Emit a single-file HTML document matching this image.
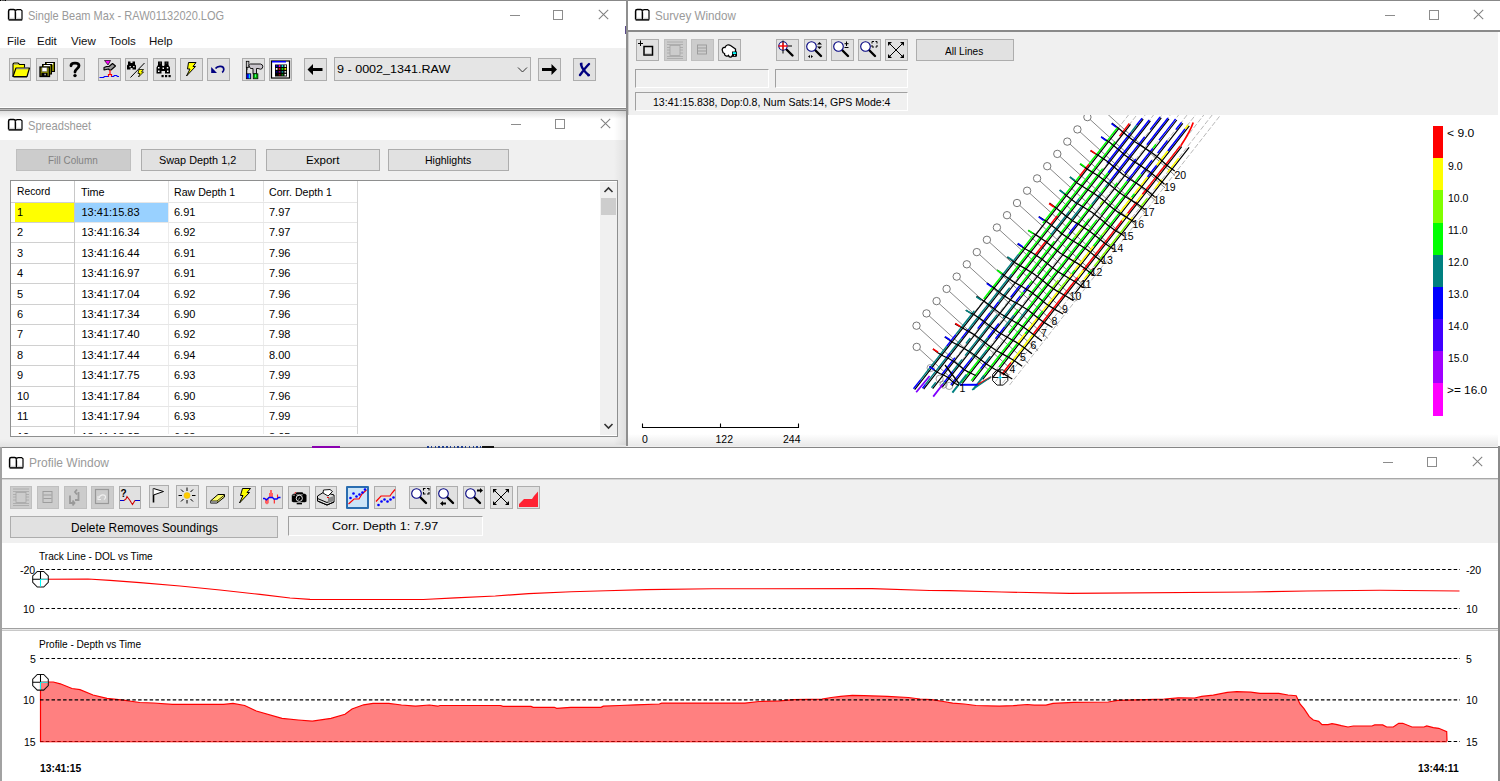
<!DOCTYPE html><html><head><meta charset="utf-8"><style>
*{box-sizing:border-box}
body{margin:0;width:1500px;height:781px;position:relative;overflow:hidden;background:#f0f0f0;font-family:"Liberation Sans",sans-serif;color:#000}
.a{position:absolute}
.t{position:absolute;white-space:nowrap;line-height:1}
.btn{position:absolute;background:#e1e1e1;border:1px solid #adadad}
.dis{position:absolute;background:#cccccc;border:1px solid #bfbfbf}
.title{position:absolute;white-space:nowrap;line-height:1;color:#999;font-size:11.5px}
</style></head><body><div class="a" style="left:0px;top:0px;width:628px;height:111px;background:#fff"></div>
<div class="a" style="left:0px;top:0px;width:628px;height:1px;background:#888"></div>
<div class="a" style="left:0px;top:0px;width:1px;height:1px;background:#000"></div>
<div class="a" style="left:2px;top:0px;width:3px;height:1px;background:#555"></div>
<div class="a" style="left:5px;top:0px;width:1px;height:1px;background:#000"></div>
<div class="a" style="left:0px;top:48px;width:626px;height:60px;background:#f0f0f0"></div>
<div class="a" style="left:0px;top:107px;width:626px;height:1px;background:#fff"></div>
<div class="a" style="left:0px;top:108px;width:628px;height:1px;background:#858585"></div>
<div class="a" style="left:0px;top:109px;width:628px;height:1px;background:#b8b8b8"></div>
<div class="a" style="left:0px;top:110px;width:628px;height:1px;background:#858585"></div>
<svg class="a" style="left:7px;top:8px" width="17" height="14" viewBox="0 0 17 14"><path d="M1.6 11.6V3.2Q1.6 1.6 3.2 1.6H6.6Q8.4 1.6 8.4 3.2V11.6" fill="#fff" stroke="#000" stroke-width="1.5"/><path d="M8.6 3.2Q8.6 1.6 10.2 1.6H13.6L15 2.8V11.6" fill="#fff" stroke="#000" stroke-width="1.2"/><path d="M1.6 11.9H15.2" stroke="#000" stroke-width="1.5"/><path d="M3 10.3H7M10 10.3H14" stroke="#bbb" stroke-width="0.8"/></svg>
<div class="t" style="left:27.63px;top:9.87px;font-size:12.2px;color:#9a9a9a;transform:scaleX(0.9048);transform-origin:0 0">Single Beam Max - RAW01132020.LOG</div>
<div class="a" style="left:510px;top:15px;width:10px;height:1px;background:#8c8c8c"></div>
<div class="a" style="left:553px;top:10px;width:10px;height:10px;border:1px solid #8c8c8c"></div>
<svg class="a" style="left:598px;top:9px" width="11" height="11" viewBox="0 0 11 11"><path d="M0.8 0.8L10.2 10.2M10.2 0.8L0.8 10.2" stroke="#808080" stroke-width="1.05"/></svg>
<div class="t" style="left:7px;top:35.80px;font-size:11.5px;color:#111;">File</div>
<div class="t" style="left:37px;top:35.80px;font-size:11.5px;color:#111;">Edit</div>
<div class="t" style="left:71px;top:35.80px;font-size:11.5px;color:#111;">View</div>
<div class="t" style="left:109px;top:35.80px;font-size:11.5px;color:#111;">Tools</div>
<div class="t" style="left:149px;top:35.80px;font-size:11.5px;color:#111;">Help</div>
<div class="a" style="left:0px;top:111px;width:626px;height:334px;background:#f0f0f0"></div>
<div class="a" style="left:0px;top:111px;width:626px;height:29px;background:#fff"></div>
<div class="a" style="left:0px;top:111px;width:626px;height:8px;background:linear-gradient(#dedede,rgba(255,255,255,0))"></div>
<svg class="a" style="left:7px;top:118px" width="17" height="14" viewBox="0 0 17 14"><path d="M1.6 11.6V3.2Q1.6 1.6 3.2 1.6H6.6Q8.4 1.6 8.4 3.2V11.6" fill="#fff" stroke="#000" stroke-width="1.5"/><path d="M8.6 3.2Q8.6 1.6 10.2 1.6H13.6L15 2.8V11.6" fill="#fff" stroke="#000" stroke-width="1.2"/><path d="M1.6 11.9H15.2" stroke="#000" stroke-width="1.5"/><path d="M3 10.3H7M10 10.3H14" stroke="#bbb" stroke-width="0.8"/></svg>
<div class="t" style="left:27.82px;top:119.57px;font-size:12.2px;color:#9a9a9a;transform:scaleX(0.9137);transform-origin:0 0">Spreadsheet</div>
<div class="a" style="left:511px;top:124px;width:10px;height:1px;background:#8c8c8c"></div>
<div class="a" style="left:555px;top:119px;width:10px;height:10px;border:1px solid #8c8c8c"></div>
<svg class="a" style="left:600px;top:118px" width="11" height="11" viewBox="0 0 11 11"><path d="M0.8 0.8L10.2 10.2M10.2 0.8L0.8 10.2" stroke="#808080" stroke-width="1.05"/></svg>
<div class="a" style="left:628px;top:0px;width:872px;height:447px;background:#f0f0f0"></div>
<div class="a" style="left:1498px;top:32px;width:2px;height:83px;background:#fff"></div>
<div class="a" style="left:628px;top:32px;width:1px;height:83px;background:#cfcfcf"></div>
<div class="a" style="left:625px;top:26px;width:1px;height:8px;background:#5a4a8a"></div>
<div class="a" style="left:628px;top:0px;width:872px;height:1px;background:#888"></div>
<div class="a" style="left:628px;top:1px;width:872px;height:30px;background:#fff"></div>
<div class="a" style="left:628px;top:30px;width:872px;height:2px;background:#8a8a8a"></div>
<svg class="a" style="left:634px;top:8px" width="17" height="14" viewBox="0 0 17 14"><path d="M1.6 11.6V3.2Q1.6 1.6 3.2 1.6H6.6Q8.4 1.6 8.4 3.2V11.6" fill="#fff" stroke="#000" stroke-width="1.5"/><path d="M8.6 3.2Q8.6 1.6 10.2 1.6H13.6L15 2.8V11.6" fill="#fff" stroke="#000" stroke-width="1.2"/><path d="M1.6 11.9H15.2" stroke="#000" stroke-width="1.5"/><path d="M3 10.3H7M10 10.3H14" stroke="#bbb" stroke-width="0.8"/></svg>
<div class="t" style="left:654.98px;top:9.67px;font-size:12.2px;color:#9a9a9a;transform:scaleX(0.9546);transform-origin:0 0">Survey Window</div>
<div class="a" style="left:1385px;top:15px;width:10px;height:1px;background:#8c8c8c"></div>
<div class="a" style="left:1429px;top:10px;width:10px;height:10px;border:1px solid #8c8c8c"></div>
<svg class="a" style="left:1473px;top:9px" width="11" height="11" viewBox="0 0 11 11"><path d="M0.8 0.8L10.2 10.2M10.2 0.8L0.8 10.2" stroke="#808080" stroke-width="1.05"/></svg>
<div class="a" style="left:628px;top:115px;width:872px;height:331px;background:#fff"></div>
<div class="a" style="left:628px;top:434px;width:870px;height:12px;background:linear-gradient(rgba(240,240,240,0),#e9e9e9)"></div>
<div class="a" style="left:614px;top:111px;width:12px;height:334px;background:linear-gradient(90deg,rgba(0,0,0,0),rgba(0,0,0,0.07))"></div>
<div class="a" style="left:626px;top:0px;width:2px;height:447px;background:#8f8f8f"></div>
<div class="a" style="left:0px;top:446px;width:1500px;height:335px;background:#f0f0f0"></div>
<div class="a" style="left:0px;top:439px;width:626px;height:8px;background:linear-gradient(rgba(0,0,0,0),rgba(0,0,0,0.06))"></div>
<div class="a" style="left:0px;top:447px;width:1500px;height:1px;background:#858585"></div>
<div class="a" style="left:0px;top:448px;width:1498px;height:30px;background:#fff"></div>
<div class="a" style="left:0px;top:478px;width:1498px;height:1px;background:#a8a8a8"></div>
<div class="a" style="left:0px;top:479px;width:1498px;height:1px;background:#d5d5d5"></div>
<div class="a" style="left:0px;top:447px;width:2px;height:334px;background:#a2a2a2"></div>
<div class="a" style="left:1498px;top:446px;width:2px;height:335px;background:#8a8a8a"></div>
<svg class="a" style="left:8px;top:456px" width="17" height="14" viewBox="0 0 17 14"><path d="M1.6 11.6V3.2Q1.6 1.6 3.2 1.6H6.6Q8.4 1.6 8.4 3.2V11.6" fill="#fff" stroke="#000" stroke-width="1.5"/><path d="M8.6 3.2Q8.6 1.6 10.2 1.6H13.6L15 2.8V11.6" fill="#fff" stroke="#000" stroke-width="1.2"/><path d="M1.6 11.9H15.2" stroke="#000" stroke-width="1.5"/><path d="M3 10.3H7M10 10.3H14" stroke="#bbb" stroke-width="0.8"/></svg>
<div class="a" style="left:312px;top:446.3px;width:28px;height:1.6px;background:#8a00b0"></div>
<div class="a" style="left:427px;top:446.3px;width:54px;height:1.6px;background:repeating-linear-gradient(90deg,#1f3f8f 0 1.5px,transparent 1.5px 3.8px)"></div>
<div class="a" style="left:482px;top:446.3px;width:12px;height:1.6px;background:#111"></div>
<div class="t" style="left:28.76px;top:457.07px;font-size:12.2px;color:#9a9a9a;transform:scaleX(0.9840);transform-origin:0 0">Profile Window</div>
<div class="a" style="left:1383px;top:462px;width:10px;height:1px;background:#8c8c8c"></div>
<div class="a" style="left:1427px;top:457px;width:10px;height:10px;border:1px solid #8c8c8c"></div>
<svg class="a" style="left:1472px;top:456px" width="11" height="11" viewBox="0 0 11 11"><path d="M0.8 0.8L10.2 10.2M10.2 0.8L0.8 10.2" stroke="#808080" stroke-width="1.05"/></svg>
<div class="a" style="left:2px;top:543px;width:1496px;height:238px;background:#fff"></div>
<div class="a" style="left:9px;top:58px;width:22px;height:23px;background:#e1e1e1;border:1px solid #adadad"></div>
<svg class="a" style="left:9px;top:58px" width="22" height="23" viewBox="0 0 22 23"><path d="M4 18.5 V6 L5 5 H9 L10.5 6.5 H15.5 V9.5" fill="#ffff00" stroke="#000" stroke-width="1.1"/><path d="M4 18.5 L7 10 H20.5 L18 18.5 Z" fill="#ffff00" stroke="#000" stroke-width="1.2" stroke-linejoin="round"/><path d="M5 6.2 H9 M7.5 10.8 H19" stroke="#7070d0" stroke-width="0.8"/><path d="M4.5 19 H18" stroke="#000" stroke-width="1"/></svg>
<div class="a" style="left:36px;top:58px;width:22px;height:23px;background:#e1e1e1;border:1px solid #adadad"></div>
<svg class="a" style="left:36px;top:58px" width="22" height="23" viewBox="0 0 22 23"><rect x="9.5" y="4.5" width="9" height="9" fill="#808000" stroke="#000" stroke-width="1"/><rect x="11" y="5" width="6" height="1.5" fill="#fff"/><rect x="6.5" y="6.5" width="9" height="9.5" fill="#808000" stroke="#000" stroke-width="1"/><rect x="8" y="7" width="6" height="1.5" fill="#fff"/><rect x="4" y="9" width="9.5" height="9.5" fill="#808000" stroke="#000" stroke-width="1.3"/><rect x="6" y="9.6" width="5" height="4" fill="#fff" stroke="#555" stroke-width="0.5"/><rect x="5.5" y="15" width="6" height="3" fill="#000"/><rect x="8.5" y="15.7" width="1.2" height="1.6" fill="#ddd"/></svg>
<div class="a" style="left:63px;top:58px;width:22px;height:23px;background:#e1e1e1;border:1px solid #adadad"></div>
<svg class="a" style="left:63px;top:58px" width="22" height="23" viewBox="0 0 22 23"><path d="M8 7.8 C8 4.2 16 4.2 16 7.8 C16 10.5 12 11 12 14" fill="none" stroke="#000" stroke-width="2.8" stroke-linecap="round"/><circle cx="12" cy="17.6" r="1.7" fill="#000"/></svg>
<div class="a" style="left:98px;top:58px;width:23px;height:23px;background:#e1e1e1;border:1px solid #adadad"></div>
<svg class="a" style="left:98px;top:58px" width="23" height="23" viewBox="0 0 23 23"><path d="M6.5 2.5 L12.5 2.5 L10 7 Z" fill="#ff00ff" stroke="#000" stroke-width="0.7"/><path d="M6 12 V9.5 L8.5 8.5 H11 L14.5 5.5 L17.5 8 L13 12 H11.5 L10.5 11 Z" fill="#999" stroke="#000" stroke-width="1.1" stroke-linejoin="round"/><path d="M12 12 V17 M10.5 19 V16.5 H13.5 V19" stroke="#ff0000" stroke-width="1.2" fill="none"/><path d="M1.5 19.5 H5.5 L6.5 18.5 H10.5 M13.5 18.5 H15.5 L16.5 17.5 H18.5 L19.5 18.5 H21" stroke="#0000ff" stroke-width="1.2" fill="none"/></svg>
<div class="a" style="left:125px;top:58px;width:23px;height:23px;background:#e1e1e1;border:1px solid #adadad"></div>
<svg class="a" style="left:125px;top:58px" width="23" height="23" viewBox="0 0 23 23"><path d="M3 3.5 h2.5 v1.5 h2 v-1.5 h2.5 v3 l1 1 v4 h-3.5 v-1.5 h-2 v1.5 h-3.5 v-4 l1 -1 z" fill="#000"/><rect x="4.5" y="8" width="1.3" height="1.3" fill="#fff"/><rect x="8.2" y="8" width="1.3" height="1.3" fill="#fff"/><path d="M5.5 19.5 L19.5 5" stroke="#000" stroke-width="1"/><path d="M14 11.5 L18.5 11.5 L16.5 14 L18.5 14 L13.5 19 L15 15.5 L13 15.5 Z" fill="#ffff00" stroke="#000" stroke-width="0.8"/></svg>
<div class="a" style="left:153px;top:58px;width:23px;height:23px;background:#e1e1e1;border:1px solid #adadad"></div>
<svg class="a" style="left:153px;top:58px" width="23" height="23" viewBox="0 0 23 23"><path d="M3.5 15.5 V9.5 L5 7 V3.5 H9 V7 L9.5 8 H11 L11.5 7 V3.5 H15.5 V7 L17 9.5 V15.5 H12 V13 H8.5 V15.5 Z" fill="#000"/><rect x="5" y="9" width="1.5" height="1.5" fill="#fff"/><rect x="9.5" y="9.5" width="1.5" height="1.5" fill="#fff"/><rect x="13.8" y="9" width="1.5" height="1.5" fill="#fff"/><rect x="5" y="12.5" width="1.5" height="1.5" fill="#fff"/><rect x="14" y="12.5" width="1.5" height="1.5" fill="#fff"/><rect x="6.5" y="4.5" width="1.5" height="1" fill="#555"/><rect x="12.8" y="4.5" width="1.5" height="1" fill="#555"/><rect x="8.5" y="17" width="2.2" height="2.2" fill="#000"/><rect x="12" y="17" width="2.2" height="2.2" fill="#000"/><rect x="15.5" y="17" width="2.2" height="2.2" fill="#000"/></svg>
<div class="a" style="left:180px;top:58px;width:23px;height:23px;background:#e1e1e1;border:1px solid #adadad"></div>
<svg class="a" style="left:180px;top:58px" width="23" height="23" viewBox="0 0 23 23"><path d="M8.5 4.5 L16 4.5 L13 8.5 L15.5 8.5 L6.5 18 L10 11 L7.5 11 Z" fill="#ffff00" stroke="#000" stroke-width="1" stroke-linejoin="round"/></svg>
<div class="a" style="left:207px;top:58px;width:23px;height:23px;background:#e1e1e1;border:1px solid #adadad"></div>
<svg class="a" style="left:207px;top:58px" width="23" height="23" viewBox="0 0 23 23"><path d="M8.5 10.5 C10.5 7.5 16.8 7.5 16.8 11.2 C16.8 12.8 16 13.8 15.2 14.5" fill="none" stroke="#000080" stroke-width="1.7"/><path d="M4.2 9 L4.2 15 L10 15 Z" fill="#000080"/></svg>
<div class="a" style="left:242px;top:58px;width:23px;height:23px;background:#e1e1e1;border:1px solid #adadad"></div>
<svg class="a" style="left:242px;top:58px" width="23" height="23" viewBox="0 0 23 23"><rect x="4.3" y="3.3" width="2.6" height="6" fill="#c8c8c8" stroke="#000" stroke-width="0.8"/><path d="M4.8 9 V16" stroke="#000" stroke-width="1.4"/><path d="M5.9 12 V15.8" stroke="#ddd" stroke-width="1"/><path d="M6.8 7.5 L8.5 6 H18.5 Q21 6.5 20.8 8.8 Q20.5 11.2 18.5 11.2 L16 10.5 H14.5 V15.8 H11 V10.5 H8.5 Z" fill="#c9c5cc" stroke="#000" stroke-width="0.9"/><rect x="4.3" y="15.8" width="4.5" height="5" fill="#0000ee" stroke="#000" stroke-width="0.7"/><rect x="6.8" y="16.3" width="1" height="4" fill="#00ffff"/><rect x="11.2" y="15.8" width="4.7" height="5" fill="#00aa00" stroke="#000" stroke-width="0.7"/><rect x="13" y="16.3" width="1" height="3" fill="#44ff88"/></svg>
<div class="a" style="left:269px;top:58px;width:23px;height:23px;background:#e1e1e1;border:1px solid #adadad"></div>
<svg class="a" style="left:269px;top:58px" width="23" height="23" viewBox="0 0 23 23"><rect x="2.5" y="3" width="18" height="17" fill="#fff" stroke="#000" stroke-width="1.2"/><rect x="3" y="3" width="14" height="1.5" fill="#0000ff"/><rect x="6" y="6.5" width="12" height="12" fill="#000"/><rect x="6.8" y="7.2" width="1.7" height="1.7" fill="#00f"/><rect x="9.7" y="7.2" width="1.7" height="1.7" fill="#f0f"/><rect x="12.6" y="7.2" width="1.7" height="1.7" fill="#0ff"/><rect x="15.5" y="7.2" width="1.7" height="1.7" fill="#fff"/><rect x="6.8" y="10.1" width="1.7" height="1.7" fill="#fff"/><rect x="9.7" y="10.1" width="1.7" height="1.7" fill="#f00"/><rect x="12.6" y="10.1" width="1.7" height="1.7" fill="#0f0"/><rect x="15.5" y="10.1" width="1.7" height="1.7" fill="#ff0"/><rect x="6.8" y="13.0" width="1.7" height="1.7" fill="#008"/><rect x="9.7" y="13.0" width="1.7" height="1.7" fill="#808"/><rect x="12.6" y="13.0" width="1.7" height="1.7" fill="#088"/><rect x="15.5" y="13.0" width="1.7" height="1.7" fill="#ccc"/><rect x="6.8" y="15.9" width="1.7" height="1.7" fill="#000"/><rect x="9.7" y="15.9" width="1.7" height="1.7" fill="#800"/><rect x="12.6" y="15.9" width="1.7" height="1.7" fill="#080"/><rect x="15.5" y="15.9" width="1.7" height="1.7" fill="#fff"/></svg>
<div class="a" style="left:304px;top:58px;width:23px;height:23px;background:#e1e1e1;border:1px solid #adadad"></div>
<svg class="a" style="left:304px;top:58px" width="23" height="23" viewBox="0 0 23 23"><path d="M3.5 11.5 L9 6 L9 10 L18.5 10 L18.5 13 L9 13 L9 17 Z" fill="#000"/></svg>
<div class="a" style="left:538px;top:58px;width:23px;height:23px;background:#e1e1e1;border:1px solid #adadad"></div>
<svg class="a" style="left:538px;top:58px" width="23" height="23" viewBox="0 0 23 23"><path d="M19 11.5 L13.5 6 L13.5 10 L4 10 L4 13 L13.5 13 L13.5 17 Z" fill="#000"/></svg>
<div class="a" style="left:573px;top:58px;width:23px;height:23px;background:#e1e1e1;border:1px solid #adadad"></div>
<svg class="a" style="left:573px;top:58px" width="23" height="23" viewBox="0 0 23 23"><path d="M8 6.5 C9 10.5 12 14 15.5 17 M16 6 C12.5 9.5 10 13 7 17" stroke="#000080" stroke-width="2.4" fill="none" stroke-linecap="round"/><path d="M7 6 L9.5 5.5 M14.5 17.5 L16.8 17" stroke="#000080" stroke-width="2"/></svg>
<div class="a" style="left:334px;top:57px;width:197px;height:24px;background:#e5e5e5;border:1px solid #adadad"></div>
<div class="t" style="left:336.72px;top:64.31px;font-size:11.8px;color:#000;transform:scaleX(1.0647);transform-origin:0 0">9 - 0002_1341.RAW</div>
<svg class="a" style="left:517px;top:66px" width="11" height="7" viewBox="0 0 11 7"><path d="M1 1.5L5.5 6L10 1.5" fill="none" stroke="#333" stroke-width="1"/></svg>
<div class="a" style="left:16px;top:149px;width:115px;height:22px;background:#cccccc;border:1px solid #bfbfbf"></div>
<div class="t" style="left:48.40px;top:154.86px;font-size:10.8px;color:#838383;transform:scaleX(0.9202);transform-origin:0 0">Fill Column</div>
<div class="a" style="left:141px;top:149px;width:115px;height:22px;background:#e1e1e1;border:1px solid #adadad"></div>
<div class="t" style="left:158.94px;top:154.86px;font-size:10.8px;color:#000;transform:scaleX(1.0051);transform-origin:0 0">Swap Depth 1,2</div>
<div class="a" style="left:266px;top:149px;width:114px;height:22px;background:#e1e1e1;border:1px solid #adadad"></div>
<div class="t" style="left:305.69px;top:154.86px;font-size:10.8px;color:#000;transform:scaleX(1.0705);transform-origin:0 0">Export</div>
<div class="a" style="left:388px;top:149px;width:121px;height:22px;background:#e1e1e1;border:1px solid #adadad"></div>
<div class="t" style="left:424.86px;top:154.86px;font-size:10.8px;color:#000;transform:scaleX(0.9736);transform-origin:0 0">Highlights</div>
<div class="a" style="left:636px;top:39px;width:23px;height:22px;background:#e1e1e1;border:1px solid #adadad"></div>
<svg class="a" style="left:636px;top:39px" width="23" height="22" viewBox="0 0 23 22"><path d="M4.5 1.5V7 M2 4.5H7" stroke="#000" stroke-width="1"/><rect x="8" y="7.5" width="8.5" height="8.5" fill="#e8e8e8" stroke="#000" stroke-width="1.5"/><path d="M8.5 15.2H16" stroke="#555" stroke-width="0.8"/></svg>
<div class="a" style="left:664px;top:39px;width:23px;height:22px;background:#cccccc;border:1px solid #bfbfbf"></div>
<svg class="a" style="left:664px;top:39px" width="23" height="22" viewBox="0 0 23 22"><g stroke="#a6a6a6" stroke-width="0.8" fill="none"><path d="M3 3H19 M3 5.5H19 M3 17.5H19 M3 19.5H19 M3 8.5H6 M3 11H6 M3 14H6 M16 8.5H19 M16 11H19 M16 14H19"/><rect x="6" y="6.5" width="10" height="10" fill="#ccc"/></g></svg>
<div class="a" style="left:691px;top:39px;width:23px;height:22px;background:#cccccc;border:1px solid #bfbfbf"></div>
<svg class="a" style="left:691px;top:39px" width="23" height="22" viewBox="0 0 23 22"><g stroke="#999" stroke-width="0.9" fill="none"><rect x="6.5" y="6" width="9" height="9"/><path d="M7 9H15 M7 12H15"/></g></svg>
<div class="a" style="left:718px;top:39px;width:23px;height:22px;background:#e1e1e1;border:1px solid #adadad"></div>
<svg class="a" style="left:718px;top:39px" width="23" height="22" viewBox="0 0 23 22"><path d="M4.5 12 C3.5 10 5 8 7 8.5 C8 6 10.5 5 12.5 6.5 L17.5 10 V17 H14 C13.5 18.5 11 18.5 10.5 16.5 C9.5 17.5 6 17 6.5 14.5 C5 14 4.5 13 4.5 12Z" fill="#fff" stroke="#000" stroke-width="1.3"/><rect x="14" y="12.5" width="5" height="5" fill="#000"/><rect x="14.8" y="13.2" width="3.4" height="1.8" fill="#00ffff"/><rect x="16" y="15.8" width="1.2" height="1" fill="#fff"/></svg>
<div class="a" style="left:776px;top:39px;width:23px;height:22px;background:#e1e1e1;border:1px solid #adadad"></div>
<svg class="a" style="left:776px;top:39px" width="23" height="22" viewBox="0 0 23 22"><path d="M10.5 10.5 L16.5 16.5" stroke="#000" stroke-width="2.4" stroke-linecap="round"/><circle cx="7" cy="7" r="4.2" fill="#fff" stroke="#000080" stroke-width="1.1"/><path d="M7 1.5V14.5" stroke="#000" stroke-width="1"/><path d="M2.5 7H11.5" stroke="#ff0000" stroke-width="1.4"/><path d="M7 3.5V10.5" stroke="#ff0000" stroke-width="1.2"/><path d="M12 7H16" stroke="#000" stroke-width="1"/></svg>
<div class="a" style="left:804px;top:39px;width:23px;height:22px;background:#e1e1e1;border:1px solid #adadad"></div>
<svg class="a" style="left:804px;top:39px" width="23" height="22" viewBox="0 0 23 22"><path d="M11.0 11.0 L17.0 17.0" stroke="#000" stroke-width="2.4" stroke-linecap="round"/><circle cx="7.5" cy="7.5" r="4.8" fill="#fff" stroke="#000080" stroke-width="1.1"/><path d="M15.5 3 L18 5.5 H13 Z M15.5 10 L18 7.5 H13 Z" fill="#000"/><path d="M4 17.5 L6 16 V19 Z M9 17.5 L7 16 V19 Z" fill="#000"/></svg>
<div class="a" style="left:831px;top:39px;width:23px;height:22px;background:#e1e1e1;border:1px solid #adadad"></div>
<svg class="a" style="left:831px;top:39px" width="23" height="22" viewBox="0 0 23 22"><path d="M11.0 11.0 L17.0 17.0" stroke="#000" stroke-width="2.4" stroke-linecap="round"/><circle cx="7.5" cy="7.5" r="4.8" fill="#fff" stroke="#000080" stroke-width="1.1"/><path d="M15.5 2.5V7 M13.5 4.7H17.5 M13.5 8.5H17.5" stroke="#000" stroke-width="1"/></svg>
<div class="a" style="left:858px;top:39px;width:23px;height:22px;background:#e1e1e1;border:1px solid #adadad"></div>
<svg class="a" style="left:858px;top:39px" width="23" height="22" viewBox="0 0 23 22"><path d="M11.0 11.0 L17.0 17.0" stroke="#000" stroke-width="2.4" stroke-linecap="round"/><circle cx="7.5" cy="7.5" r="4.8" fill="#fff" stroke="#000080" stroke-width="1.1"/><path d="M14 4.5V2.5H16 M17.5 2.5H19V4.5 M19 6V8H17.5 M16 8H14V6" stroke="#000" stroke-width="1" fill="none"/></svg>
<div class="a" style="left:885px;top:39px;width:23px;height:22px;background:#e1e1e1;border:1px solid #adadad"></div>
<svg class="a" style="left:885px;top:39px" width="23" height="22" viewBox="0 0 23 22"><path d="M4 4L18 18M18 4L4 18" stroke="#000" stroke-width="1"/><path d="M3 3H7L3 7Z M19 3H15L19 7Z M3 19H7L3 15Z M19 19H15L19 15Z" fill="#000"/></svg>
<div class="a" style="left:916px;top:39px;width:98px;height:22px;background:#e1e1e1;border:1px solid #adadad"></div>
<div class="t" style="left:945.29px;top:45.92px;font-size:11.2px;color:#000;transform:scaleX(0.9060);transform-origin:0 0">All Lines</div>
<div class="a" style="left:635px;top:69px;width:134px;height:19px;border-top:1px solid #a0a0a0;border-left:1px solid #a0a0a0;border-bottom:1px solid #fff;border-right:1px solid #fff"></div>
<div class="a" style="left:775px;top:69px;width:133px;height:19px;border-top:1px solid #a0a0a0;border-left:1px solid #a0a0a0;border-bottom:1px solid #fff;border-right:1px solid #fff"></div>
<div class="a" style="left:635px;top:92px;width:273px;height:19px;border-top:1px solid #a0a0a0;border-left:1px solid #a0a0a0;border-bottom:1px solid #fff;border-right:1px solid #fff"></div>
<div class="t" style="left:653px;top:97.30px;font-size:10.55px;">13:41:15.838, Dop:0.8, Num Sats:14, GPS Mode:4</div>
<div class="a" style="left:10px;top:486px;width:22px;height:23px;background:#cccccc;border:1px solid #bfbfbf"></div>
<svg class="a" style="left:10px;top:486px" width="22" height="23" viewBox="0 0 22 23"><g stroke="#a6a6a6" stroke-width="0.8" fill="none"><path d="M3 3H19 M3 5.5H19 M3 17.5H19 M3 19.5H19 M3 8.5H6 M3 11H6 M3 14H6 M16 8.5H19 M16 11H19 M16 14H19"/><rect x="6" y="6.5" width="10" height="10" fill="#ccc"/></g></svg>
<div class="a" style="left:37px;top:486px;width:22px;height:23px;background:#cccccc;border:1px solid #bfbfbf"></div>
<svg class="a" style="left:37px;top:486px" width="22" height="23" viewBox="0 0 22 23"><g stroke="#999" stroke-width="0.9" fill="none"><rect x="6" y="5.5" width="9" height="11"/><path d="M6.5 9H14.5 M6.5 12.5H14.5"/></g></svg>
<div class="a" style="left:64px;top:486px;width:23px;height:23px;background:#cccccc;border:1px solid #bfbfbf"></div>
<svg class="a" style="left:64px;top:486px" width="23" height="23" viewBox="0 0 23 23"><path d="M6 9.5V17H10 M14.5 6V14H11 M8.5 14.5 L10.5 17 L8.5 19.5 M13 3.5 L11 6 L13 8.5" stroke="#999" stroke-width="1.8" fill="none"/></svg>
<div class="a" style="left:91px;top:486px;width:23px;height:23px;background:#cccccc;border:1px solid #bfbfbf"></div>
<svg class="a" style="left:91px;top:486px" width="23" height="23" viewBox="0 0 23 23"><rect x="4.5" y="3.5" width="13" height="14" fill="none" stroke="#999" stroke-width="1.2"/><path d="M8 12 C9 8 15 8 14.5 11.5 C14.5 12.5 13.5 13 13 13.5" stroke="#eee" stroke-width="1.2" fill="none"/><path d="M7 10V13.5H10" stroke="#eee" stroke-width="1.1" fill="none"/></svg>
<div class="a" style="left:119px;top:486px;width:22px;height:23px;background:#e1e1e1;border:1px solid #adadad"></div>
<svg class="a" style="left:119px;top:486px" width="22" height="23" viewBox="0 0 22 23"><text x="1.5" y="10.5" font-family="Liberation Sans" font-weight="bold" font-size="10" fill="#000">?</text><path d="M1 14.5H5 L7 13 L8 10.5 L9.5 12.5 L11 14.5 L12.5 17 L13.5 18.5 L15 16 L16 14.5 H21" fill="none" stroke="#cc0000" stroke-width="1.1"/><path d="M1 14.5H5 M16 14.5H21" stroke="#0000cc" stroke-width="1.1"/></svg>
<div class="a" style="left:149px;top:485px;width:20px;height:23px;background:#e1e1e1;border:1px solid #adadad"></div>
<svg class="a" style="left:149px;top:485px" width="20" height="23" viewBox="0 0 20 23"><path d="M4.5 3.5V17.5" stroke="#000" stroke-width="1.6"/><path d="M4.5 3.5 L14.5 6.5 L4.5 10" fill="#fff" stroke="#000" stroke-width="1"/></svg>
<div class="a" style="left:176px;top:485px;width:23px;height:23px;background:#e1e1e1;border:1px solid #adadad"></div>
<svg class="a" style="left:176px;top:485px" width="23" height="23" viewBox="0 0 23 23"><g stroke="#000" stroke-width="1"><path d="M11 2.5V6 M11 15V18.5 M2.5 10.5H6 M16 10.5H19.5 M5 4.5L7.5 7 M14.5 14L17 16.5 M17 4.5L14.5 7 M7.5 14L5 16.5"/></g><circle cx="11" cy="10.5" r="3" fill="#ffcc00" stroke="#e6b800" stroke-width="0.5"/></svg>
<div class="a" style="left:206px;top:486px;width:23px;height:23px;background:#e1e1e1;border:1px solid #adadad"></div>
<svg class="a" style="left:206px;top:486px" width="23" height="23" viewBox="0 0 23 23"><path d="M4.5 15 L12 8.5 L18.5 8.5 L18.5 11 L11 17 L4.5 17Z" fill="#ffff66" stroke="#000" stroke-width="1"/><path d="M4.5 15 H11 L18.5 9 M11 15V17" fill="none" stroke="#000" stroke-width="0.8"/><path d="M4.5 15H11V17H4.5Z" fill="#888"/></svg>
<div class="a" style="left:233px;top:486px;width:23px;height:23px;background:#e1e1e1;border:1px solid #adadad"></div>
<svg class="a" style="left:233px;top:486px" width="23" height="23" viewBox="0 0 23 23"><path d="M9.5 2.5 L17.5 2.5 L14 6.5 L16.5 6.5 L6.5 17 L10 9.5 L7.5 9.5 Z" fill="#ffff00" stroke="#000" stroke-width="1" stroke-linejoin="round"/></svg>
<div class="a" style="left:261px;top:486px;width:22px;height:23px;background:#e1e1e1;border:1px solid #adadad"></div>
<svg class="a" style="left:261px;top:486px" width="22" height="23" viewBox="0 0 22 23"><path d="M9 4 H11 V7 H12 V12 H8 V7 H9 Z" fill="#ff6060"/><path d="M4 12.5 H7.8 V17 L6 18.5 L4 17 Z" fill="#ff6060"/><path d="M13.3 13 V17.5 M16.5 8.5 V12.5" stroke="#ff2020" stroke-width="1.1"/><path d="M2 12.5 L3.5 12.5 L5.5 14 L8 11.5 H11.5 L13 13 H16 L17.5 11.5 H19.5" fill="none" stroke="#0000ff" stroke-width="1.3"/></svg>
<div class="a" style="left:288px;top:486px;width:22px;height:23px;background:#e1e1e1;border:1px solid #adadad"></div>
<svg class="a" style="left:288px;top:486px" width="22" height="23" viewBox="0 0 22 23"><path d="M3.8 9 L5.5 7.8 H7.5 L8.5 6.2 H14.5 L15.5 7.8 H17 L18.5 9 V15.5 L17 16.2 H5.5 L3.8 15.5 Z" fill="#000"/><path d="M6.5 7.2 L8 6.5" stroke="#ff0000" stroke-width="1"/><path d="M4.5 9.2 H7" stroke="#ddd" stroke-width="0.7"/><circle cx="11.3" cy="12.3" r="3.1" fill="none" stroke="#fff" stroke-width="0.9"/><path d="M10.2 13.4 L12 11.6" stroke="#ccc" stroke-width="0.9"/><path d="M8.7 17.6 H14" stroke="#000" stroke-width="1.5"/><path d="M8.2 8.8 H14.8" stroke="#fff" stroke-width="0.6"/></svg>
<div class="a" style="left:315px;top:486px;width:22px;height:23px;background:#e1e1e1;border:1px solid #adadad"></div>
<svg class="a" style="left:315px;top:486px" width="22" height="23" viewBox="0 0 22 23"><path d="M2.5 10 L9 6 L19 9 V16 L12 19 L2.5 15 Z" fill="#ddd" stroke="#000" stroke-width="1"/><path d="M8.5 4 L15 3.5 L17.5 5.5 L13 10 L8 7Z" fill="#fff" stroke="#000" stroke-width="0.9"/><path d="M2.5 15 L12 19 L19 16 M2.5 12.5 L12 16.5 L19 13" fill="none" stroke="#000" stroke-width="1"/><rect x="12" y="11" width="2" height="1" fill="#ff0000"/><path d="M13 12 L19 10 V15 L13 17Z" fill="#888"/></svg>
<div class="a" style="left:346px;top:486px;width:23px;height:23px;background:#cce4f7;border:2px solid #2a6db0;border-radius:1px"></div>
<svg class="a" style="left:346px;top:486px" width="23" height="23" viewBox="0 0 23 23"><path d="M2.5 18 L8 13 H13 L16 8 L20.5 4" stroke="#ff0000" stroke-width="1.2" fill="none"/><circle cx="4.5" cy="12" r="1.3" fill="#0000ff"/><circle cx="7.5" cy="7.5" r="1.3" fill="#0000ff"/><circle cx="10.5" cy="10.5" r="1.3" fill="#0000ff"/><circle cx="13.5" cy="8.5" r="1.3" fill="#0000ff"/><circle cx="16.5" cy="6.5" r="1.3" fill="#0000ff"/><circle cx="19" cy="3.5" r="1.3" fill="#0000ff"/></svg>
<div class="a" style="left:374px;top:486px;width:22px;height:23px;background:#e1e1e1;border:1px solid #adadad"></div>
<svg class="a" style="left:374px;top:486px" width="22" height="23" viewBox="0 0 22 23"><path d="M2 15.5 L7 10 H16 L18 7 L21 3.5" stroke="#ff0000" stroke-width="1.2" fill="none"/><circle cx="4.5" cy="19" r="1.3" fill="#0000ff"/><circle cx="7.5" cy="15.5" r="1.3" fill="#0000ff"/><circle cx="10.5" cy="13.5" r="1.3" fill="#0000ff"/><circle cx="13.5" cy="15.5" r="1.3" fill="#0000ff"/><circle cx="16.5" cy="13.5" r="1.3" fill="#0000ff"/><circle cx="19.5" cy="11.5" r="1.3" fill="#0000ff"/></svg>
<div class="a" style="left:409px;top:486px;width:22px;height:23px;background:#e1e1e1;border:1px solid #adadad"></div>
<svg class="a" style="left:409px;top:486px" width="22" height="23" viewBox="0 0 22 23"><path d="M11.0 11.0 L17.0 17.0" stroke="#000" stroke-width="2.4" stroke-linecap="round"/><circle cx="7.5" cy="7.5" r="4.8" fill="#fff" stroke="#000080" stroke-width="1.1"/><path d="M14.5 4.5V2.5H16.5 M18 2.5H20V4.5 M20 6V8H18 M16.5 8H14.5V6" stroke="#000" stroke-width="1.1" fill="none"/></svg>
<div class="a" style="left:436px;top:486px;width:22px;height:23px;background:#e1e1e1;border:1px solid #adadad"></div>
<svg class="a" style="left:436px;top:486px" width="22" height="23" viewBox="0 0 22 23"><path d="M11.0 11.0 L17.0 17.0" stroke="#000" stroke-width="2.4" stroke-linecap="round"/><circle cx="7.5" cy="7.5" r="4.8" fill="#fff" stroke="#000080" stroke-width="1.1"/><path d="M4 17.5 L7 15 V16.5 H10 V18.5 H7 V20 Z" fill="#000"/></svg>
<div class="a" style="left:463px;top:486px;width:22px;height:23px;background:#e1e1e1;border:1px solid #adadad"></div>
<svg class="a" style="left:463px;top:486px" width="22" height="23" viewBox="0 0 22 23"><path d="M11.0 11.0 L17.0 17.0" stroke="#000" stroke-width="2.4" stroke-linecap="round"/><circle cx="7.5" cy="7.5" r="4.8" fill="#fff" stroke="#000080" stroke-width="1.1"/><path d="M20 4.5 L17 2 V3.5 H14 V5.5 H17 V7 Z" fill="#000"/></svg>
<div class="a" style="left:490px;top:486px;width:23px;height:23px;background:#e1e1e1;border:1px solid #adadad"></div>
<svg class="a" style="left:490px;top:486px" width="23" height="23" viewBox="0 0 23 23"><path d="M4 4L18 18M18 4L4 18" stroke="#000" stroke-width="1"/><path d="M3 3H7L3 7Z M19 3H15L19 7Z M3 19H7L3 15Z M19 19H15L19 15Z" fill="#000"/></svg>
<div class="a" style="left:517px;top:486px;width:23px;height:23px;background:#e1e1e1;border:1px solid #adadad"></div>
<svg class="a" style="left:517px;top:486px" width="23" height="23" viewBox="0 0 23 23"><path d="M2 21 V18 L7 13 H15 L17 10 L21 5.5 V21 Z" fill="#ff2233"/></svg>
<div class="a" style="left:10px;top:516px;width:268px;height:22px;background:#e1e1e1;border:1px solid #adadad"></div>
<div class="t" style="left:71.17px;top:521.99px;font-size:12.3px;color:#000;transform:scaleX(0.9641);transform-origin:0 0">Delete Removes Soundings</div>
<div class="a" style="left:288px;top:516px;width:195px;height:20px;border-top:1px solid #a0a0a0;border-left:1px solid #a0a0a0;border-bottom:1px solid #fff;border-right:1px solid #fff"></div>
<div class="t" style="left:331.92px;top:521.41px;font-size:11.8px;color:#000;transform:scaleX(1.0670);transform-origin:0 0">Corr. Depth 1: 7.97</div>
<svg class="a" style="left:0;top:0" width="1500" height="781" viewBox="0 0 1500 781">
<defs><clipPath id="mc"><rect x="629" y="115" width="869" height="320"/></clipPath></defs>
<g clip-path="url(#mc)">
<path d="M932.0 366.5L1199.8 23.7M939.0 368.2L1205.0 27.7M946.0 369.9L1210.2 31.8M953.1 371.5L1215.4 35.9M960.1 373.2L1220.6 39.9M967.2 374.9L1225.8 44.0M974.2 376.6L1231.0 48.0M981.3 378.3L1236.2 52.1M988.3 380.0L1241.4 56.2M995.4 381.7L1246.6 60.2M1002.4 383.4L1251.8 64.3M1009.5 385.1L1257.0 68.4" stroke="#9a9a9a" stroke-width="0.7" fill="none" stroke-dasharray="5 2"/>
<path d="M919.1 328.1L970.0 374.6M929.2 315.9L989.5 370.8M939.2 303.6L1008.1 366.4M949.3 291.3L1028.3 363.4M959.4 279.1L1038.1 350.8M969.4 266.8L1047.8 338.3M979.5 254.5L1057.6 325.8M989.5 242.2L1067.4 313.3M999.6 230.0L1077.2 300.8M1009.6 217.7L1087.0 288.2M1019.7 205.4L1096.8 275.7M1029.7 193.2L1106.5 263.2M1039.8 180.9L1116.3 250.7M1049.9 168.6L1126.1 238.2M1059.9 156.4L1135.9 225.6M1070.0 144.1L1145.7 213.1M1080.0 131.8L1155.4 200.6M1090.1 119.5L1165.2 188.1M1100.1 107.3L1175.0 175.6M919.6 349.2L956.8 383.3" stroke="#707070" stroke-width="0.85" fill="none"/>
<circle cx="916.5" cy="325.7" r="3.7" fill="#fff" stroke="#666" stroke-width="0.9"/><circle cx="926.5" cy="313.4" r="3.7" fill="#fff" stroke="#666" stroke-width="0.9"/><circle cx="936.6" cy="301.1" r="3.7" fill="#fff" stroke="#666" stroke-width="0.9"/><circle cx="946.6" cy="288.9" r="3.7" fill="#fff" stroke="#666" stroke-width="0.9"/><circle cx="956.7" cy="276.6" r="3.7" fill="#fff" stroke="#666" stroke-width="0.9"/><circle cx="966.8" cy="264.3" r="3.7" fill="#fff" stroke="#666" stroke-width="0.9"/><circle cx="976.8" cy="252.1" r="3.7" fill="#fff" stroke="#666" stroke-width="0.9"/><circle cx="986.9" cy="239.8" r="3.7" fill="#fff" stroke="#666" stroke-width="0.9"/><circle cx="996.9" cy="227.5" r="3.7" fill="#fff" stroke="#666" stroke-width="0.9"/><circle cx="1007.0" cy="215.2" r="3.7" fill="#fff" stroke="#666" stroke-width="0.9"/><circle cx="1017.0" cy="203.0" r="3.7" fill="#fff" stroke="#666" stroke-width="0.9"/><circle cx="1027.1" cy="190.7" r="3.7" fill="#fff" stroke="#666" stroke-width="0.9"/><circle cx="1037.1" cy="178.4" r="3.7" fill="#fff" stroke="#666" stroke-width="0.9"/><circle cx="1047.2" cy="166.2" r="3.7" fill="#fff" stroke="#666" stroke-width="0.9"/><circle cx="1057.3" cy="153.9" r="3.7" fill="#fff" stroke="#666" stroke-width="0.9"/><circle cx="1067.3" cy="141.6" r="3.7" fill="#fff" stroke="#666" stroke-width="0.9"/><circle cx="1077.4" cy="129.4" r="3.7" fill="#fff" stroke="#666" stroke-width="0.9"/><circle cx="1087.4" cy="117.1" r="3.7" fill="#fff" stroke="#666" stroke-width="0.9"/><circle cx="1097.5" cy="104.8" r="3.7" fill="#fff" stroke="#666" stroke-width="0.9"/><circle cx="916.7" cy="346.9" r="3.7" fill="#fff" stroke="#666" stroke-width="0.9"/>
<circle cx="930.6" cy="368" r="3.6" fill="none" stroke="#888" stroke-width="0.8"/><circle cx="939.6" cy="378.8" r="3.6" fill="none" stroke="#888" stroke-width="0.8"/><circle cx="943.5" cy="384.6" r="3.6" fill="none" stroke="#888" stroke-width="0.8"/><circle cx="949.2" cy="385.9" r="3.6" fill="none" stroke="#888" stroke-width="0.8"/>
<path d="M914.7 389.7L1119.1 128.1M923.7 389.2L1130.5 124.4M932.7 388.6L1143.2 119.1M942.3 387.2L1150.4 120.9M951.9 385.9L1161.3 117.9M962.2 383.7L1169.0 118.9M972.4 381.6L1176.8 120.0M982.7 379.4L1182.8 123.3M992.9 377.3L1189.3 125.9M1003.2 375.1L1181.7 146.6M1074.6 293.9L1189.1 147.3" stroke="#000" stroke-width="1.2" fill="none"/>
<path d="M913.5 388.8L920.9 379.4M946.7 346.3L955.9 334.4M922.5 388.2L925.6 384.3M945.9 358.3L950.2 352.8M961.3 338.6L968.7 329.1M941.3 375.1L950.6 363.2M950.6 363.2L954.9 357.7M977.7 328.6L986.9 316.7M986.9 316.7L990.0 312.8M993.1 308.9L998.6 301.8M1107.0 163.1L1112.5 156.0M1112.5 156.0L1123.6 141.8M1123.6 141.8L1127.9 136.3M1127.9 136.3L1131.0 132.4M1136.5 125.3L1139.6 121.3M1139.6 121.3L1142.1 118.2M944.2 382.4L949.7 375.3M949.7 375.3L952.8 371.3M1010.7 297.3L1019.9 285.4M1108.0 172.8L1117.2 160.9M1117.2 160.9L1120.3 157.0M1120.3 157.0L1131.4 142.8M1131.4 142.8L1140.6 131.0M1140.6 131.0L1148.0 121.5M1148.0 121.5L1149.2 120.0M950.8 384.9L955.1 379.4M955.1 379.4L959.4 373.9M959.4 373.9L964.9 366.8M964.9 366.8L972.3 357.4M987.7 337.7L998.8 323.5M1016.0 301.4L1020.3 295.9M1023.4 292.0L1028.9 284.9M1069.0 233.6L1072.0 229.7M1072.0 229.7L1077.6 222.6M1109.6 181.6L1115.1 174.5M1115.1 174.5L1119.4 169.0M1119.4 169.0L1130.5 154.8M1130.5 154.8L1133.6 150.9M1133.6 150.9L1144.7 136.7M1150.2 129.6L1160.1 117.0M995.5 338.7L1004.7 326.8M1124.8 173.2L1130.3 166.1M1130.3 166.1L1135.8 159.0M1146.9 144.8L1152.5 137.7M1152.5 137.7L1155.5 133.8M1155.5 133.8L1164.8 122.0M1164.8 122.0L1167.9 118.0M980.5 368.8L986.0 361.7M1127.0 181.3L1130.1 177.3M1130.1 177.3L1133.2 173.4M1133.2 173.4L1136.2 169.5M1136.2 169.5L1143.6 160.0M1143.6 160.0L1152.9 148.2M1159.0 140.3L1166.4 130.9M1166.4 130.9L1173.8 121.4M1173.8 121.4L1175.6 119.0M1140.9 174.4L1152.0 160.2M1157.6 153.1L1163.1 146.0M1163.1 146.0L1167.4 140.5M1176.0 129.5L1180.3 124.0M1180.3 124.0L1181.6 122.4M1147.5 177.0L1156.7 165.2M1167.8 151.0L1172.1 145.5M1172.1 145.5L1179.5 136.0M1179.5 136.0L1185.0 128.9" stroke="#0000ff" stroke-width="1.5" fill="none"/>
<path d="M920.9 379.4L928.2 369.9M928.2 369.9L937.5 358.1M937.5 358.1L946.7 346.3M955.9 334.4L959.0 330.5M959.0 330.5L963.3 325.0M963.3 325.0L974.4 310.8M1000.3 277.7L1009.5 265.9M1009.5 265.9L1018.7 254.1M925.6 384.3L928.6 380.4M928.6 380.4L931.7 376.4M931.7 376.4L942.8 362.2M942.8 362.2L945.9 358.3M950.2 352.8L955.7 345.7M955.7 345.7L961.3 338.6M968.7 329.1L971.7 325.2M971.7 325.2L982.8 311.0M982.8 311.0L985.9 307.1M985.9 307.1L993.3 297.6M993.3 297.6L1002.5 285.8M1002.5 285.8L1011.8 274.0M931.5 387.7L935.8 382.2M966.0 343.5L970.3 338.0M990.0 312.8L993.1 308.9M998.6 301.8L1009.7 287.6M1050.9 234.8L1060.2 223.0M1060.2 223.0L1069.4 211.2M1074.9 204.1L1079.3 198.5M1131.0 132.4L1136.5 125.3M941.1 386.3L944.2 382.4M952.8 371.3L962.1 359.5M965.1 355.6L976.2 341.4M976.2 341.4L980.5 335.9M980.5 335.9L986.1 328.8M986.1 328.8L997.1 314.6M1071.0 220.0L1082.1 205.9M972.3 357.4L976.6 351.8M976.6 351.8L987.7 337.7M1003.1 318.0L1010.5 308.5M1010.5 308.5L1016.0 301.4M1091.7 204.5L1101.0 192.7M1105.3 187.2L1109.6 181.6M979.5 359.2L986.9 349.7M1004.7 326.8L1013.9 315.0M986.0 361.7L990.3 356.2M1019.9 318.4L1027.3 308.9" stroke="#008080" stroke-width="1.5" fill="none"/>
<path d="M983.7 299.0L991.0 289.5M991.0 289.5L1000.3 277.7M1018.7 254.1L1021.8 250.1M1021.8 250.1L1026.1 244.6M1026.1 244.6L1033.5 235.1M1042.8 223.3L1052.0 211.5M1052.0 211.5L1057.5 204.4M1057.5 204.4L1068.6 190.2M1068.6 190.2L1079.7 176.0M1088.9 164.2L1092.0 160.3M1092.0 160.3L1097.6 153.2M1097.6 153.2L1106.8 141.4M1106.8 141.4L1109.9 137.4M1109.9 137.4L1112.9 133.5M1112.9 133.5L1117.9 127.2M1011.8 274.0L1022.8 259.8M1022.8 259.8L1030.2 250.3M1030.2 250.3L1033.3 246.4M1033.3 246.4L1037.6 240.9M1037.6 240.9L1046.8 229.1M1046.8 229.1L1049.9 225.1M1057.3 215.7L1066.5 203.8M1066.5 203.8L1069.6 199.9M1069.6 199.9L1073.9 194.4M1073.9 194.4L1079.5 187.3M1079.5 187.3L1088.7 175.5M1088.7 175.5L1094.3 168.4M1094.3 168.4L1097.3 164.4M1097.3 164.4L1106.6 152.6M1106.6 152.6L1109.6 148.7M1109.6 148.7L1115.2 141.6M1017.1 278.1L1026.3 266.3M1026.3 266.3L1035.5 254.5M1046.6 240.3L1050.9 234.8M1069.4 211.2L1074.9 204.1M1079.3 198.5L1082.3 194.6M1082.3 194.6L1089.7 185.1M1089.7 185.1L1092.8 181.2M1092.8 181.2L1098.3 174.1M1098.3 174.1L1102.6 168.6M1019.9 285.4L1031.0 271.3M1031.0 271.3L1040.2 259.4M1040.2 259.4L1043.3 255.5M1043.3 255.5L1054.4 241.3M1059.9 234.2L1071.0 220.0M1082.1 205.9L1089.5 196.4M1089.5 196.4L1098.7 184.6M1098.7 184.6L1108.0 172.8M1020.3 295.9L1023.4 292.0M1028.9 284.9L1032.0 280.9M1037.6 273.8L1044.9 264.4M1044.9 264.4L1054.2 252.6M1054.2 252.6L1059.7 245.5M1059.7 245.5L1069.0 233.6M1077.6 222.6L1080.7 218.7M1080.7 218.7L1086.2 211.6M1086.2 211.6L1091.7 204.5M1101.0 192.7L1105.3 187.2M961.0 382.8L968.4 373.3M968.4 373.3L979.5 359.2M986.9 349.7L989.9 345.8M1013.9 315.0L1018.3 309.5M1029.3 295.3L1032.4 291.4M1032.4 291.4L1043.5 277.2M1043.5 277.2L1050.9 267.7M1062.0 253.6L1065.0 249.6M1065.0 249.6L1074.3 237.8M1083.5 226.0L1089.1 218.9M1114.3 186.6L1117.4 182.6M971.2 380.6L974.3 376.7M974.3 376.7L977.4 372.8M977.4 372.8L980.5 368.8M1008.8 332.6L1019.9 318.4M1027.3 308.9L1038.3 294.8M1038.3 294.8L1042.7 289.2M1042.7 289.2L1051.9 277.4M1051.9 277.4L1063.0 263.2M1063.0 263.2L1067.3 257.7M1067.3 257.7L1076.5 245.9M1076.5 245.9L1087.6 231.7M1087.6 231.7L1096.8 219.9M1101.1 214.4L1110.4 202.6M1110.4 202.6L1117.8 193.1M1117.8 193.1L1127.0 181.3M1152.9 148.2L1155.9 144.2M981.5 378.5L987.0 371.4M987.0 371.4L994.4 362.0M994.4 362.0L997.5 358.0M997.5 358.0L1006.7 346.2M1006.7 346.2L1012.3 339.1M1012.3 339.1L1015.3 335.2M1015.3 335.2L1019.7 329.6M1019.7 329.6L1030.7 315.5M1030.7 315.5L1041.8 301.3M1041.8 301.3L1051.1 289.5M1061.5 276.1L1070.8 264.2M1075.1 258.7L1082.5 249.3M1082.5 249.3L1093.5 235.1M1093.5 235.1L1102.8 223.3M1102.8 223.3L1112.0 211.4M1112.0 211.4L1123.1 197.3M1123.1 197.3L1127.4 191.7M1127.4 191.7L1136.6 179.9M1136.6 179.9L1140.9 174.4M999.1 366.9L1006.5 357.4M1006.5 357.4L1017.6 343.3M1025.0 333.8L1028.1 329.9M1037.3 318.0L1042.8 310.9M1071.8 273.9L1074.8 270.0M1093.3 246.3L1097.6 240.8M1097.6 240.8L1101.9 235.3M1106.2 229.8L1117.3 215.6M1117.3 215.6L1120.4 211.7M1131.5 197.5L1134.6 193.5M1088.2 274.0L1091.2 270.1" stroke="#00ff00" stroke-width="1.5" fill="none"/>
<path d="M1079.7 176.0L1088.9 164.2M1049.9 225.1L1057.3 215.7M1119.5 136.1L1126.9 126.6M1126.9 126.6L1129.3 123.5M1035.5 254.5L1046.6 240.3M1002.0 374.2L1005.1 370.3M1005.1 370.3L1008.1 366.3M1008.1 366.3L1011.2 362.4M1033.4 334.0L1042.6 322.2M1042.6 322.2L1051.8 310.4M1051.8 310.4L1057.4 303.3M1057.4 303.3L1062.9 296.2M1062.9 296.2L1066.0 292.3M1066.0 292.3L1070.3 286.7M1070.3 286.7L1077.7 277.3M1083.2 270.2L1094.3 256.0M1094.3 256.0L1101.7 246.5M1101.7 246.5L1109.1 237.1M1109.1 237.1L1113.4 231.6M1113.4 231.6L1119.0 224.5M1119.0 224.5L1122.0 220.5M1127.6 213.5L1136.8 201.6M1142.3 194.5L1153.4 180.4M1153.4 180.4L1157.7 174.8M1157.7 174.8L1167.0 163.0M1167.0 163.0L1170.1 159.1M1170.1 159.1L1177.4 149.6M1177.4 149.6L1180.5 145.7" stroke="#ff0000" stroke-width="1.5" fill="none"/>
<path d="M1074.3 237.8L1083.5 226.0M1100.1 204.7L1103.2 200.8M1051.1 289.5L1058.4 280.0M1070.8 264.2L1075.1 258.7M1057.6 292.0L1068.7 277.9M1101.9 235.3L1106.2 229.8M1094.3 266.2L1099.9 259.1M1099.9 259.1L1109.1 247.2M1109.1 247.2L1120.2 233.1M1120.2 233.1L1129.4 221.2M1139.9 207.8L1147.3 198.4" stroke="#80ff00" stroke-width="1.5" fill="none"/>
<path d="M1017.6 343.3L1025.0 333.8M1028.1 329.9L1037.3 318.0M1042.8 310.9L1052.1 299.1M1052.1 299.1L1057.6 292.0M1068.7 277.9L1071.8 273.9M1074.8 270.0L1084.1 258.2M1084.1 258.2L1093.3 246.3M1120.4 211.7L1131.5 197.5M1134.6 193.5L1142.0 184.1M1142.0 184.1L1147.5 177.0M1156.7 165.2L1167.8 151.0M1185.0 128.9L1188.1 125.0M1011.2 362.4L1022.3 348.2M1022.3 348.2L1033.4 334.0M1077.7 277.3L1083.2 270.2M1122.0 220.5L1127.6 213.5M1136.8 201.6L1142.3 194.5M1083.9 279.6L1088.2 274.0M1129.4 221.2L1132.5 217.3M1154.7 188.9L1162.0 179.5M1167.6 172.4L1178.7 158.2" stroke="#ffff00" stroke-width="1.5" fill="none"/>
<path d="M1180.8 145.9 C1187.9 135.0 1191.9 126.7 1193.2 122.6" stroke="#ff0000" stroke-width="1.7" fill="none"/>
<path d="M916.2 392.2L929.6 376.0M933.2 396.6L943.0 384.0" stroke="#8000ff" stroke-width="1.8" fill="none"/>
<path d="M952.4 392.6L966.6 374.5M973.1 389.7L984.1 375.5" stroke="#008080" stroke-width="2" fill="none"/>
<path d="M929.7 366.1L933.0 369.0L936.4 371.8L940.3 373.8L944.6 375.5L948.3 377.8L951.5 380.8L955.0 383.5L959.0 385.4M933.0 348.9L937.8 352.8L943.3 356.0L949.1 358.7L954.6 361.9L959.4 365.8L964.3 369.7L969.9 372.8L975.7 375.5M944.7 337.1L953.0 342.5L961.9 347.2L970.5 352.2L978.5 358.0L986.4 364.0L994.8 369.2L1003.7 373.9L1012.3 379.0M955.0 323.9L963.8 328.8L972.5 333.6L980.6 339.3L988.4 345.3L996.7 350.8L1005.5 355.6L1014.1 360.5L1022.2 366.3M965.7 310.2L974.5 315.0L982.8 320.5L990.6 326.6L998.6 332.3L1007.3 337.2L1016.0 342.1L1024.2 347.7L1032.0 353.8M976.5 296.4L984.9 301.7L992.7 307.8L1000.6 313.7L1009.2 318.8L1018.0 323.6L1026.2 329.0L1034.0 335.1L1042.0 340.9M987.1 282.9L995.0 288.8L1002.8 294.9L1011.1 300.2L1019.9 305.0L1028.3 310.3L1036.1 316.4L1044.0 322.4L1052.5 327.5M997.2 269.9L1005.0 276.1L1013.2 281.6L1021.9 286.5L1030.4 291.6L1038.3 297.6L1046.0 303.7L1054.3 309.1L1063.1 314.0M1007.2 257.1L1015.3 262.9L1023.9 267.9L1032.5 272.9L1040.5 278.7L1048.1 284.9L1056.3 290.6L1065.0 295.5L1073.5 300.6M1017.4 244.0L1025.9 249.2L1034.6 254.2L1042.7 259.8L1050.4 266.1L1058.3 271.9L1066.9 277.0L1075.5 282.0L1083.5 287.8M1028.0 230.5L1036.7 235.4L1045.0 240.9L1052.6 247.1L1060.4 253.2L1068.9 258.4L1077.5 263.4L1085.6 269.0L1093.3 275.3M1038.9 216.6L1047.2 222.0L1055.0 228.1L1062.6 234.3L1070.9 239.8L1079.5 244.7L1087.8 250.2L1095.5 256.4L1103.2 262.6M1049.5 203.0L1057.4 209.0L1064.9 215.3L1073.0 221.0L1081.6 226.1L1090.0 231.4L1097.7 237.5L1105.4 243.8L1113.6 249.3M1059.8 189.9L1067.3 196.2L1075.2 202.2L1083.7 207.3L1092.2 212.5L1100.0 218.5L1107.6 224.9L1115.6 230.7L1124.2 235.8M1069.8 177.1L1077.5 183.2L1085.9 188.5L1094.4 193.7L1102.4 199.5L1109.9 205.9L1117.7 211.9L1126.2 217.1L1134.7 222.3M1079.9 164.1L1088.1 169.6L1096.6 174.8L1104.7 180.4L1112.3 186.8L1120.0 193.0L1128.3 198.4L1136.8 203.6L1144.8 209.4M1090.4 150.7L1098.9 155.8L1107.1 161.3L1114.7 167.6L1122.3 174.0L1130.4 179.6L1138.9 184.8L1147.0 190.4L1154.6 196.8M1101.2 136.9L1109.5 142.2L1117.2 148.4L1124.7 154.9L1132.6 160.8L1141.1 166.0L1149.3 171.5L1157.0 177.7L1164.5 184.2M1111.9 123.1L1119.7 129.2L1127.2 135.7L1134.9 141.8L1143.3 147.1L1151.6 152.5L1159.4 158.6L1166.8 165.2L1174.7 171.1" stroke="#000" stroke-width="1.25" fill="none"/>
<path d="M929.3 366.6L934.4 369.8M945.0 336.7L950.1 340.0M986.7 283.4L991.7 286.8M1017.9 243.5L1022.8 246.9M1038.7 216.8L1043.6 220.3M1101.1 136.9L1106.0 140.5M1111.5 123.6L1116.3 127.2" stroke="#0000ff" stroke-width="1.6" fill="none"/>
<path d="M932.9 348.9L938.0 352.2M955.4 323.4L960.5 326.7M1049.1 203.5L1054.0 207.0M1090.7 150.3L1095.6 153.8" stroke="#ff0000" stroke-width="1.6" fill="none"/>
<path d="M965.9 310.1L970.9 313.4M976.3 296.8L981.3 300.1M1007.5 256.8L1012.5 260.2M1059.5 190.2L1064.4 193.7M1069.9 176.9L1074.8 180.4" stroke="#008080" stroke-width="1.6" fill="none"/>
<path d="M997.1 270.1L1002.1 273.5M1028.3 230.2L1033.2 233.6M1080.3 163.6L1085.2 167.1" stroke="#00ff00" stroke-width="1.6" fill="none"/>
<path d="M960 384.8 L979 384.8" stroke="#0000ff" stroke-width="2" fill="none"/><path d="M959 383.5 L945 365" stroke="#000" stroke-width="1.3" fill="none"/>
<path d="M978 384.5 L991 377" stroke="#ff0000" stroke-width="1.8" fill="none"/><path d="M972 390 L991 377" stroke="#008080" stroke-width="1.3" fill="none"/>
<text x="962.4" y="391.8" text-anchor="middle" font-family="Liberation Sans" font-size="10.5" fill="#000">1</text>
<text x="1012.5" y="373.1" text-anchor="middle" font-family="Liberation Sans" font-size="10.5" fill="#000">4</text>
<text x="1023.0" y="361.0" text-anchor="middle" font-family="Liberation Sans" font-size="10.5" fill="#000">5</text>
<text x="1033.4" y="348.9" text-anchor="middle" font-family="Liberation Sans" font-size="10.5" fill="#000">6</text>
<text x="1043.9" y="336.7" text-anchor="middle" font-family="Liberation Sans" font-size="10.5" fill="#000">7</text>
<text x="1054.4" y="324.6" text-anchor="middle" font-family="Liberation Sans" font-size="10.5" fill="#000">8</text>
<text x="1064.9" y="312.5" text-anchor="middle" font-family="Liberation Sans" font-size="10.5" fill="#000">9</text>
<text x="1075.4" y="300.4" text-anchor="middle" font-family="Liberation Sans" font-size="10.5" fill="#000">10</text>
<text x="1085.9" y="288.3" text-anchor="middle" font-family="Liberation Sans" font-size="10.5" fill="#000">11</text>
<text x="1096.4" y="276.2" text-anchor="middle" font-family="Liberation Sans" font-size="10.5" fill="#000">12</text>
<text x="1106.9" y="264.1" text-anchor="middle" font-family="Liberation Sans" font-size="10.5" fill="#000">13</text>
<text x="1117.4" y="252.0" text-anchor="middle" font-family="Liberation Sans" font-size="10.5" fill="#000">14</text>
<text x="1127.8" y="239.9" text-anchor="middle" font-family="Liberation Sans" font-size="10.5" fill="#000">15</text>
<text x="1138.3" y="227.8" text-anchor="middle" font-family="Liberation Sans" font-size="10.5" fill="#000">16</text>
<text x="1148.8" y="215.7" text-anchor="middle" font-family="Liberation Sans" font-size="10.5" fill="#000">17</text>
<text x="1159.3" y="203.5" text-anchor="middle" font-family="Liberation Sans" font-size="10.5" fill="#000">18</text>
<text x="1169.8" y="191.4" text-anchor="middle" font-family="Liberation Sans" font-size="10.5" fill="#000">19</text>
<text x="1180.3" y="179.3" text-anchor="middle" font-family="Liberation Sans" font-size="10.5" fill="#000">20</text>
<polygon points="997.1,369.9 1003.3,369.9 1007.8,374.4 1007.8,380.6 1003.3,385.1 997.1,385.1 992.6,380.6 992.6,374.4" fill="none" stroke="#111" stroke-width="1"/><path d="M992.6 377.5H1007.8000000000001M1000.2 369.9V385.1" stroke="#111" stroke-width="1"/><path d="M998.2 377.5H1002.2M1000.2 375.5V379.5" stroke="#00e0ff" stroke-width="1"/>
</g></svg>
<div class="a" style="left:1433px;top:126.2px;width:10px;height:32.6px;background:#ff0000"></div>
<div class="t" style="left:1447.15px;top:128.26px;font-size:10.8px;color:#000;transform:scaleX(1.1220);transform-origin:0 0">&lt; 9.0</div>
<div class="a" style="left:1433px;top:158.3px;width:10px;height:32.6px;background:#ffff00"></div>
<div class="t" style="left:1448px;top:160.50px;font-size:10.5px;">9.0</div>
<div class="a" style="left:1433px;top:190.4px;width:10px;height:32.6px;background:#80ff00"></div>
<div class="t" style="left:1448px;top:192.60px;font-size:10.5px;">10.0</div>
<div class="a" style="left:1433px;top:222.5px;width:10px;height:32.6px;background:#00ff00"></div>
<div class="t" style="left:1448px;top:224.70px;font-size:10.5px;">11.0</div>
<div class="a" style="left:1433px;top:254.6px;width:10px;height:32.6px;background:#008080"></div>
<div class="t" style="left:1448px;top:256.80px;font-size:10.5px;">12.0</div>
<div class="a" style="left:1433px;top:286.7px;width:10px;height:32.6px;background:#0000ff"></div>
<div class="t" style="left:1448px;top:288.90px;font-size:10.5px;">13.0</div>
<div class="a" style="left:1433px;top:318.8px;width:10px;height:32.6px;background:#4000ff"></div>
<div class="t" style="left:1448px;top:321.00px;font-size:10.5px;">14.0</div>
<div class="a" style="left:1433px;top:350.9px;width:10px;height:32.6px;background:#a000ff"></div>
<div class="t" style="left:1448px;top:353.10px;font-size:10.5px;">15.0</div>
<div class="a" style="left:1433px;top:383.0px;width:10px;height:32.6px;background:#ff00ff"></div>
<div class="t" style="left:1447.17px;top:385.06px;font-size:10.8px;color:#000;transform:scaleX(1.0965);transform-origin:0 0">&gt;= 16.0</div>
<svg class="a" style="left:640px;top:420px" width="170" height="12" viewBox="0 0 170 12"><path d="M2.5 3.5V7.5H158.5V3.5 M80.5 3.5V7.5" fill="none" stroke="#000" stroke-width="1.1"/></svg>
<div class="t" style="left:642px;top:434.40px;font-size:10.5px;">0</div>
<div class="t" style="left:715.5px;top:434.40px;font-size:10.5px;">122</div>
<div class="t" style="left:783px;top:434.40px;font-size:10.5px;">244</div>
<div class="a" style="left:10px;top:180px;width:608px;height:257px;background:#fff;border:1px solid #8e8f8f"></div>
<div class="a" style="left:600px;top:182px;width:17px;height:253px;background:#f0f0f0"></div>
<div class="a" style="left:601px;top:198px;width:15px;height:17px;background:#cdcdcd"></div>
<svg class="a" style="left:603px;top:186px" width="11" height="8" viewBox="0 0 11 8"><path d="M1.5 6L5.5 2L9.5 6" fill="none" stroke="#333" stroke-width="1.6"/></svg>
<svg class="a" style="left:603px;top:422px" width="11" height="8" viewBox="0 0 11 8"><path d="M1.5 2L5.5 6L9.5 2" fill="none" stroke="#333" stroke-width="1.6"/></svg>
<div class="a" style="left:11px;top:181px;width:347px;height:253px;overflow:hidden">
<div class="a" style="left:0;top:0;width:347px;height:20.5px;background:#fff"></div>
<div class="a" style="left:63px;top:0;width:1px;height:253px;background:#c8c8c8"></div>
<div class="a" style="left:157px;top:0;width:1px;height:20px;background:#e0e0e0"></div>
<div class="a" style="left:252px;top:0;width:1px;height:20px;background:#e0e0e0"></div>
<div class="a" style="left:346px;top:0;width:1px;height:253px;background:#d5d5d5"></div>
<div class="a" style="left:157px;top:20px;width:1px;height:233px;background:#ececec"></div>
<div class="a" style="left:252px;top:20px;width:1px;height:233px;background:#ececec"></div>
<div class="t" style="left:6px;top:6px;font-size:10.3px">Record</div>
<div class="t" style="left:70px;top:6px;font-size:10.8px">Time</div>
<div class="t" style="left:163px;top:6px;font-size:10.6px">Raw Depth 1</div>
<div class="t" style="left:258px;top:6px;font-size:10.6px">Corr. Depth 1</div>
<div class="a" style="left:0;top:20.50px;width:63px;height:1px;background:#d0d0d0"></div>
<div class="a" style="left:64px;top:20.50px;width:282px;height:1px;background:#e6e6e6"></div>
<div class="a" style="left:4px;top:21.50px;width:59px;height:20px;background:#ffff00"></div>
<div class="a" style="left:64px;top:21.50px;width:93px;height:20px;background:#99d1ff"></div>
<div class="t" style="left:6px;top:25.70px;font-size:11px">1</div>
<div class="t" style="left:70.5px;top:25.70px;font-size:11px">13:41:15.83</div>
<div class="t" style="left:163px;top:25.70px;font-size:11px">6.91</div>
<div class="t" style="left:258px;top:25.70px;font-size:11px">7.97</div>
<div class="a" style="left:0;top:40.95px;width:63px;height:1px;background:#d0d0d0"></div>
<div class="a" style="left:64px;top:40.95px;width:282px;height:1px;background:#e6e6e6"></div>
<div class="t" style="left:6px;top:46.15px;font-size:11px">2</div>
<div class="t" style="left:70.5px;top:46.15px;font-size:11px">13:41:16.34</div>
<div class="t" style="left:163px;top:46.15px;font-size:11px">6.92</div>
<div class="t" style="left:258px;top:46.15px;font-size:11px">7.97</div>
<div class="a" style="left:0;top:61.40px;width:63px;height:1px;background:#d0d0d0"></div>
<div class="a" style="left:64px;top:61.40px;width:282px;height:1px;background:#e6e6e6"></div>
<div class="t" style="left:6px;top:66.60px;font-size:11px">3</div>
<div class="t" style="left:70.5px;top:66.60px;font-size:11px">13:41:16.44</div>
<div class="t" style="left:163px;top:66.60px;font-size:11px">6.91</div>
<div class="t" style="left:258px;top:66.60px;font-size:11px">7.96</div>
<div class="a" style="left:0;top:81.85px;width:63px;height:1px;background:#d0d0d0"></div>
<div class="a" style="left:64px;top:81.85px;width:282px;height:1px;background:#e6e6e6"></div>
<div class="t" style="left:6px;top:87.05px;font-size:11px">4</div>
<div class="t" style="left:70.5px;top:87.05px;font-size:11px">13:41:16.97</div>
<div class="t" style="left:163px;top:87.05px;font-size:11px">6.91</div>
<div class="t" style="left:258px;top:87.05px;font-size:11px">7.96</div>
<div class="a" style="left:0;top:102.30px;width:63px;height:1px;background:#d0d0d0"></div>
<div class="a" style="left:64px;top:102.30px;width:282px;height:1px;background:#e6e6e6"></div>
<div class="t" style="left:6px;top:107.50px;font-size:11px">5</div>
<div class="t" style="left:70.5px;top:107.50px;font-size:11px">13:41:17.04</div>
<div class="t" style="left:163px;top:107.50px;font-size:11px">6.92</div>
<div class="t" style="left:258px;top:107.50px;font-size:11px">7.96</div>
<div class="a" style="left:0;top:122.75px;width:63px;height:1px;background:#d0d0d0"></div>
<div class="a" style="left:64px;top:122.75px;width:282px;height:1px;background:#e6e6e6"></div>
<div class="t" style="left:6px;top:127.95px;font-size:11px">6</div>
<div class="t" style="left:70.5px;top:127.95px;font-size:11px">13:41:17.34</div>
<div class="t" style="left:163px;top:127.95px;font-size:11px">6.90</div>
<div class="t" style="left:258px;top:127.95px;font-size:11px">7.96</div>
<div class="a" style="left:0;top:143.20px;width:63px;height:1px;background:#d0d0d0"></div>
<div class="a" style="left:64px;top:143.20px;width:282px;height:1px;background:#e6e6e6"></div>
<div class="t" style="left:6px;top:148.40px;font-size:11px">7</div>
<div class="t" style="left:70.5px;top:148.40px;font-size:11px">13:41:17.40</div>
<div class="t" style="left:163px;top:148.40px;font-size:11px">6.92</div>
<div class="t" style="left:258px;top:148.40px;font-size:11px">7.98</div>
<div class="a" style="left:0;top:163.65px;width:63px;height:1px;background:#d0d0d0"></div>
<div class="a" style="left:64px;top:163.65px;width:282px;height:1px;background:#e6e6e6"></div>
<div class="t" style="left:6px;top:168.85px;font-size:11px">8</div>
<div class="t" style="left:70.5px;top:168.85px;font-size:11px">13:41:17.44</div>
<div class="t" style="left:163px;top:168.85px;font-size:11px">6.94</div>
<div class="t" style="left:258px;top:168.85px;font-size:11px">8.00</div>
<div class="a" style="left:0;top:184.10px;width:63px;height:1px;background:#d0d0d0"></div>
<div class="a" style="left:64px;top:184.10px;width:282px;height:1px;background:#e6e6e6"></div>
<div class="t" style="left:6px;top:189.30px;font-size:11px">9</div>
<div class="t" style="left:70.5px;top:189.30px;font-size:11px">13:41:17.75</div>
<div class="t" style="left:163px;top:189.30px;font-size:11px">6.93</div>
<div class="t" style="left:258px;top:189.30px;font-size:11px">7.99</div>
<div class="a" style="left:0;top:204.55px;width:63px;height:1px;background:#d0d0d0"></div>
<div class="a" style="left:64px;top:204.55px;width:282px;height:1px;background:#e6e6e6"></div>
<div class="t" style="left:6px;top:209.75px;font-size:11px">10</div>
<div class="t" style="left:70.5px;top:209.75px;font-size:11px">13:41:17.84</div>
<div class="t" style="left:163px;top:209.75px;font-size:11px">6.90</div>
<div class="t" style="left:258px;top:209.75px;font-size:11px">7.96</div>
<div class="a" style="left:0;top:225.00px;width:63px;height:1px;background:#d0d0d0"></div>
<div class="a" style="left:64px;top:225.00px;width:282px;height:1px;background:#e6e6e6"></div>
<div class="t" style="left:6px;top:230.20px;font-size:11px">11</div>
<div class="t" style="left:70.5px;top:230.20px;font-size:11px">13:41:17.94</div>
<div class="t" style="left:163px;top:230.20px;font-size:11px">6.93</div>
<div class="t" style="left:258px;top:230.20px;font-size:11px">7.99</div>
<div class="a" style="left:0;top:245.45px;width:63px;height:1px;background:#d0d0d0"></div>
<div class="a" style="left:64px;top:245.45px;width:282px;height:1px;background:#e6e6e6"></div>
<div class="t" style="left:6px;top:250.65px;font-size:11px">12</div>
<div class="t" style="left:70.5px;top:250.65px;font-size:11px">13:41:18.05</div>
<div class="t" style="left:163px;top:250.65px;font-size:11px">6.88</div>
<div class="t" style="left:258px;top:250.65px;font-size:11px">8.05</div>
</div>
<svg class="a" style="left:0;top:540px" width="1500" height="241" viewBox="0 540 1500 241"><rect x="2" y="628" width="1496" height="3" fill="#e8e8e8"/><rect x="2" y="628" width="1496" height="1" fill="#a0a0a0"/><rect x="2" y="630" width="1496" height="1" fill="#c8c8c8"/><polygon points="40.5,682.0 53.3,682.0 60.3,683.8 72.0,688.5 80.0,689.7 93.0,695.0 107.0,698.3 123.3,700.2 139.7,702.5 153.7,703.0 172.3,704.4 223.7,704.4 233.0,703.4 244.7,705.5 256.3,711.0 282.0,718.4 298.3,720.0 312.3,721.2 331.0,718.4 345.0,714.2 352.0,709.0 363.6,704.8 373.0,703.4 388.7,703.4 401.5,705.0 415.5,706.2 429.5,705.0 437.7,706.2 440.0,705.5 500.7,705.5 503.0,706.4 531.0,706.4 533.3,707.3 554.3,707.3 556.7,708.3 570.7,707.3 601.0,707.3 603.3,706.2 619.7,705.5 636.0,704.8 659.3,704.0 661.7,703.1 745.0,703.1 759.0,701.5 780.0,700.8 794.0,699.6 822.0,699.2 831.3,697.5 840.7,696.4 852.3,695.4 864.0,695.7 887.3,696.4 908.3,697.5 920.0,699.0 931.7,699.6 943.3,701.5 952.7,703.1 964.3,704.0 976.0,705.5 999.3,706.2 1013.3,705.7 1027.3,704.5 1034.3,705.2 1046.0,705.2 1053.0,703.4 1073.3,702.4 1108.3,702.0 1117.7,700.3 1145.7,699.6 1164.3,699.0 1178.3,697.8 1194.7,698.0 1201.7,696.4 1213.3,695.2 1227.3,692.4 1236.7,691.7 1250.7,692.2 1260.0,693.3 1278.7,693.3 1288.0,695.0 1296.2,695.7 1300.0,704.0 1304.0,708.7 1309.3,716.7 1313.3,720.0 1318.7,721.3 1322.0,724.7 1328.0,724.7 1332.0,723.7 1336.0,724.3 1341.3,725.7 1348.0,727.0 1353.3,726.0 1372.0,726.0 1374.7,724.9 1382.7,724.9 1386.7,727.0 1393.3,727.0 1398.7,723.3 1402.7,723.3 1412.0,727.0 1424.0,727.0 1426.7,726.0 1433.3,727.6 1438.7,728.3 1446.7,731.6 1447.0,741.3 1447,741.5 40.5,741.5" fill="#ff8080"/><polyline points="40.5,741.5 40.5,682.0 53.3,682.0 60.3,683.8 72.0,688.5 80.0,689.7 93.0,695.0 107.0,698.3 123.3,700.2 139.7,702.5 153.7,703.0 172.3,704.4 223.7,704.4 233.0,703.4 244.7,705.5 256.3,711.0 282.0,718.4 298.3,720.0 312.3,721.2 331.0,718.4 345.0,714.2 352.0,709.0 363.6,704.8 373.0,703.4 388.7,703.4 401.5,705.0 415.5,706.2 429.5,705.0 437.7,706.2 440.0,705.5 500.7,705.5 503.0,706.4 531.0,706.4 533.3,707.3 554.3,707.3 556.7,708.3 570.7,707.3 601.0,707.3 603.3,706.2 619.7,705.5 636.0,704.8 659.3,704.0 661.7,703.1 745.0,703.1 759.0,701.5 780.0,700.8 794.0,699.6 822.0,699.2 831.3,697.5 840.7,696.4 852.3,695.4 864.0,695.7 887.3,696.4 908.3,697.5 920.0,699.0 931.7,699.6 943.3,701.5 952.7,703.1 964.3,704.0 976.0,705.5 999.3,706.2 1013.3,705.7 1027.3,704.5 1034.3,705.2 1046.0,705.2 1053.0,703.4 1073.3,702.4 1108.3,702.0 1117.7,700.3 1145.7,699.6 1164.3,699.0 1178.3,697.8 1194.7,698.0 1201.7,696.4 1213.3,695.2 1227.3,692.4 1236.7,691.7 1250.7,692.2 1260.0,693.3 1278.7,693.3 1288.0,695.0 1296.2,695.7 1300.0,704.0 1304.0,708.7 1309.3,716.7 1313.3,720.0 1318.7,721.3 1322.0,724.7 1328.0,724.7 1332.0,723.7 1336.0,724.3 1341.3,725.7 1348.0,727.0 1353.3,726.0 1372.0,726.0 1374.7,724.9 1382.7,724.9 1386.7,727.0 1393.3,727.0 1398.7,723.3 1402.7,723.3 1412.0,727.0 1424.0,727.0 1426.7,726.0 1433.3,727.6 1438.7,728.3 1446.7,731.6 1447.0,741.3" fill="none" stroke="#ff0000" stroke-width="1.2"/><g stroke="#000" stroke-width="1.2" stroke-dasharray="3.5 2.27" fill="none"><path d="M40 569.5H1460 M40 608.5H1460 M40 658.5H1460 M40 699.8H1460"/></g><path d="M40 741.5H1460" stroke="#000" stroke-width="1.2" stroke-dasharray="3.5 2.27"/><path d="M40 741.8H1447" stroke="#ff0000" stroke-width="0.9"/><polyline points="40.0,579.2 88.0,579.0 110.0,580.4 140.0,582.6 180.0,586.0 220.0,590.0 260.0,594.4 290.0,598.0 310.0,599.4 423.3,599.5 455.3,597.9 495.3,596.0 528.7,593.6 571.3,591.7 606.0,590.7 646.0,589.6 712.7,588.8 872.0,588.6 929.6,590.5 950.0,590.6 1002.0,592.0 1069.6,593.4 1251.6,592.0 1307.0,591.0 1379.8,590.3 1459.5,591.0" fill="none" stroke="#ff0000" stroke-width="1.15"/><polygon points="37.3,571.4 43.7,571.4 48.3,576.0 48.3,582.4 43.7,587.0 37.3,587.0 32.7,582.4 32.7,576.0" fill="none" stroke="#111" stroke-width="1.05"/><path d="M32.7 579.2H40.5 M40.5 571.4000000000001V579.2" stroke="#000" stroke-width="1.05"/><path d="M40.5 579.2H47.8 M40.5 579.2V586.5" stroke="#00ffff" stroke-width="1.05"/><polygon points="37.3,674.5 43.7,674.5 48.3,679.1 48.3,685.5 43.7,690.1 37.3,690.1 32.7,685.5 32.7,679.1" fill="none" stroke="#111" stroke-width="1.05"/><path d="M32.7 682.3H40.5 M40.5 674.5V682.3" stroke="#000" stroke-width="1.05"/><path d="M40.5 682.3H47.8 M40.5 682.3V689.5999999999999" stroke="#00ffff" stroke-width="1.05"/></svg>
<div class="t" style="left:39px;top:551.80px;font-size:10.1px;">Track Line - DOL vs Time</div>
<div class="t" style="left:39px;top:640.30px;font-size:10.1px;">Profile - Depth vs Time</div>
<div class="t" style="left:20px;top:564.80px;font-size:10.5px;">-20</div>
<div class="t" style="left:1466px;top:564.80px;font-size:10.5px;">-20</div>
<div class="t" style="left:23px;top:603.80px;font-size:10.5px;">10</div>
<div class="t" style="left:1466px;top:603.80px;font-size:10.5px;">10</div>
<div class="t" style="left:30px;top:653.80px;font-size:10.5px;">5</div>
<div class="t" style="left:1466px;top:653.80px;font-size:10.5px;">5</div>
<div class="t" style="left:23px;top:695.10px;font-size:10.5px;">10</div>
<div class="t" style="left:1466px;top:695.10px;font-size:10.5px;">10</div>
<div class="t" style="left:24px;top:736.80px;font-size:10.5px;">15</div>
<div class="t" style="left:1466px;top:736.80px;font-size:10.5px;">15</div>
<div class="t" style="left:40px;top:764.30px;font-size:10.3px;font-weight:bold">13:41:15</div>
<div class="t" style="left:1418px;top:764.30px;font-size:10.3px;font-weight:bold">13:44:11</div></body></html>
